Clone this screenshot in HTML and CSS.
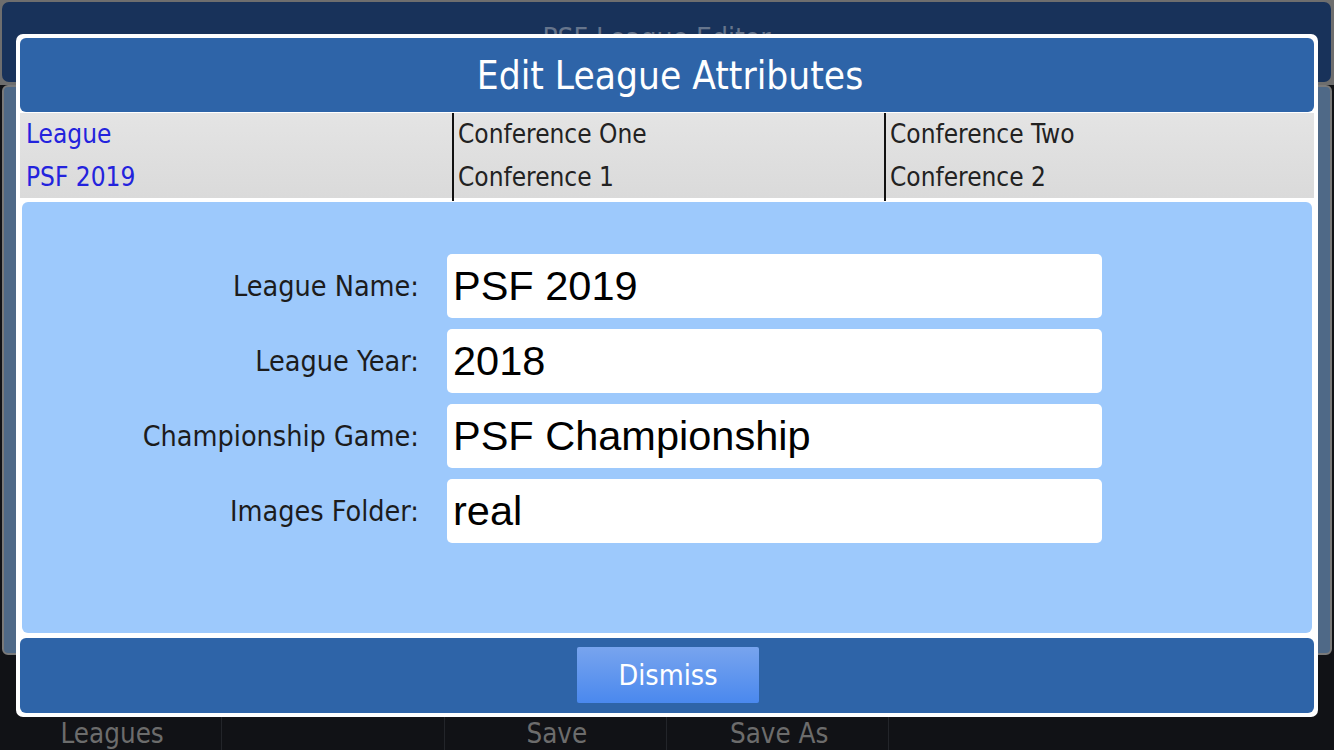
FILE: index.html
```html
<!DOCTYPE html>
<html>
<head>
<meta charset="utf-8">
<link rel="stylesheet" href="styles.css">
</head>
<body>
<div class="app">
  <header class="topbar"><span class="app-title">PSF League Editor</span></header>
  <main class="main"></main>
  <nav class="toolbar">
    <div class="tool">Leagues</div>
    <div class="tool"></div>
    <div class="tool">Save</div>
    <div class="tool">Save As</div>
    <div class="tool last"></div>
    <div class="tool last"></div>
  </nav>
</div>

<div class="modal">
  <div class="modal-title">Edit League Attributes</div>
  <div class="strip">
    <div class="col active">
      <div class="cell">League</div>
      <div class="cell">PSF 2019</div>
    </div>
    <div class="col">
      <div class="cell">Conference One</div>
      <div class="cell">Conference 1</div>
    </div>
    <div class="col">
      <div class="cell">Conference Two</div>
      <div class="cell">Conference 2</div>
    </div>
  </div>
  <div class="panel">
    <div class="form">
      <label class="label">League Name:</label>
      <div class="field">PSF 2019</div>
      <label class="label">League Year:</label>
      <div class="field">2018</div>
      <label class="label">Championship Game:</label>
      <div class="field">PSF Championship</div>
      <label class="label">Images Folder:</label>
      <div class="field">real</div>
    </div>
  </div>
  <div class="modal-footer">
    <button class="dismiss">Dismiss</button>
  </div>
</div>
</body>
</html>
```
FILE: styles.css
```css
html, body {
  margin: 0;
  padding: 0;
}
body {
  width: 1334px;
  height: 750px;
  overflow: hidden;
  background: #111216;
  font-family: "DejaVu Sans Condensed", "DejaVu Sans", sans-serif;
  font-stretch: condensed;
  position: relative;
}
.app {
  width: 1334px;
  height: 750px;
  display: flex;
  flex-direction: column;
}
.topbar {
  height: 80px;
  margin: 0;
  padding: 2px 3px 3px 2px;
  background: #6e6e6e;
  display: flex;
}
.app-title {
  flex: 1;
  background: #18325a;
  border-radius: 7px;
  color: #66758c;
  font-size: 28px;
  display: flex;
  justify-content: center;
  padding-top: 20px;
  padding-right: 20px;
  box-sizing: border-box;
}
.main {
  height: 570px;
  background: #4f6987;
  border: 2px solid #7a7a7a;
  border-radius: 6px;
  margin: 0 2px 0 2px;
  box-sizing: border-box;
}
.toolbar {
  flex: 1;
  display: grid;
  grid-template-columns: repeat(6, 1fr);
  background: #111216;
}
.tool {
  border-right: 1px solid #23252a;
  color: #6c6c6c;
  font-size: 27.5px;
  display: flex;
  align-items: flex-end;
  justify-content: center;
  padding-bottom: 1px;
  padding-left: 3px;
}
.tool.last { border-right: none; }

.modal {
  position: absolute;
  left: 16px;
  top: 34px;
  width: 1302px;
  height: 683px;
  box-sizing: border-box;
  background: #ffffff;
  border-radius: 7px;
  padding: 4px;
  display: flex;
  flex-direction: column;
}
.modal-title {
  height: 74px;
  flex: none;
  background: #2e64a8;
  border-radius: 6px;
  color: #ffffff;
  font-size: 38.5px;
  display: flex;
  align-items: center;
  justify-content: center;
  padding-left: 6px;
}
.strip {
  height: 85px;
  flex: none;
  margin-top: 1px;
  display: grid;
  grid-template-columns: 432px 432px 1fr;
  background: linear-gradient(#e4e4e4, #dadada);
}
.col {
  display: flex;
  flex-direction: column;
  padding-left: 6px;
  padding-top: 2px;
}
.col + .col {
  border-left: 2px solid #111111;
  padding-left: 4px;
}
.cell {
  height: 43px;
  line-height: 38px;
  font-size: 26px;
  color: #222222;
}
.col.active .cell { color: #2323dd; }
.panel {
  flex: 1;
  margin: 4px 2px 0 2px;
  background: #9dc9fc;
  border-radius: 6px;
  padding-top: 52px;
}
.form {
  display: grid;
  grid-template-columns: 397px 655px;
  column-gap: 28px;
  row-gap: 11px;
}
.label {
  justify-self: end;
  align-self: center;
  font-size: 28.5px;
  color: #1c1c1c;
}
.field {
  height: 64px;
  background: #ffffff;
  border-radius: 5px;
  font-family: "Liberation Sans", Arial, sans-serif;
  font-stretch: normal;
  font-size: 41.5px;
  color: #000000;
  padding-left: 6px;
  display: flex;
  align-items: center;
}
.modal-footer {
  height: 75px;
  flex: none;
  margin-top: 5px;
  background: #2e64a8;
  border-radius: 6px;
  display: flex;
  justify-content: center;
  padding-top: 9px;
  box-sizing: border-box;
}
.dismiss {
  width: 182px;
  height: 56px;
  margin-left: 2px;
  border: none;
  border-radius: 2px;
  background: linear-gradient(#78a4ee, #4a88ee);
  color: #ffffff;
  font-family: "DejaVu Sans Condensed", "DejaVu Sans", sans-serif;
  font-stretch: condensed;
  font-size: 28.5px;
  padding: 0;
}
```
